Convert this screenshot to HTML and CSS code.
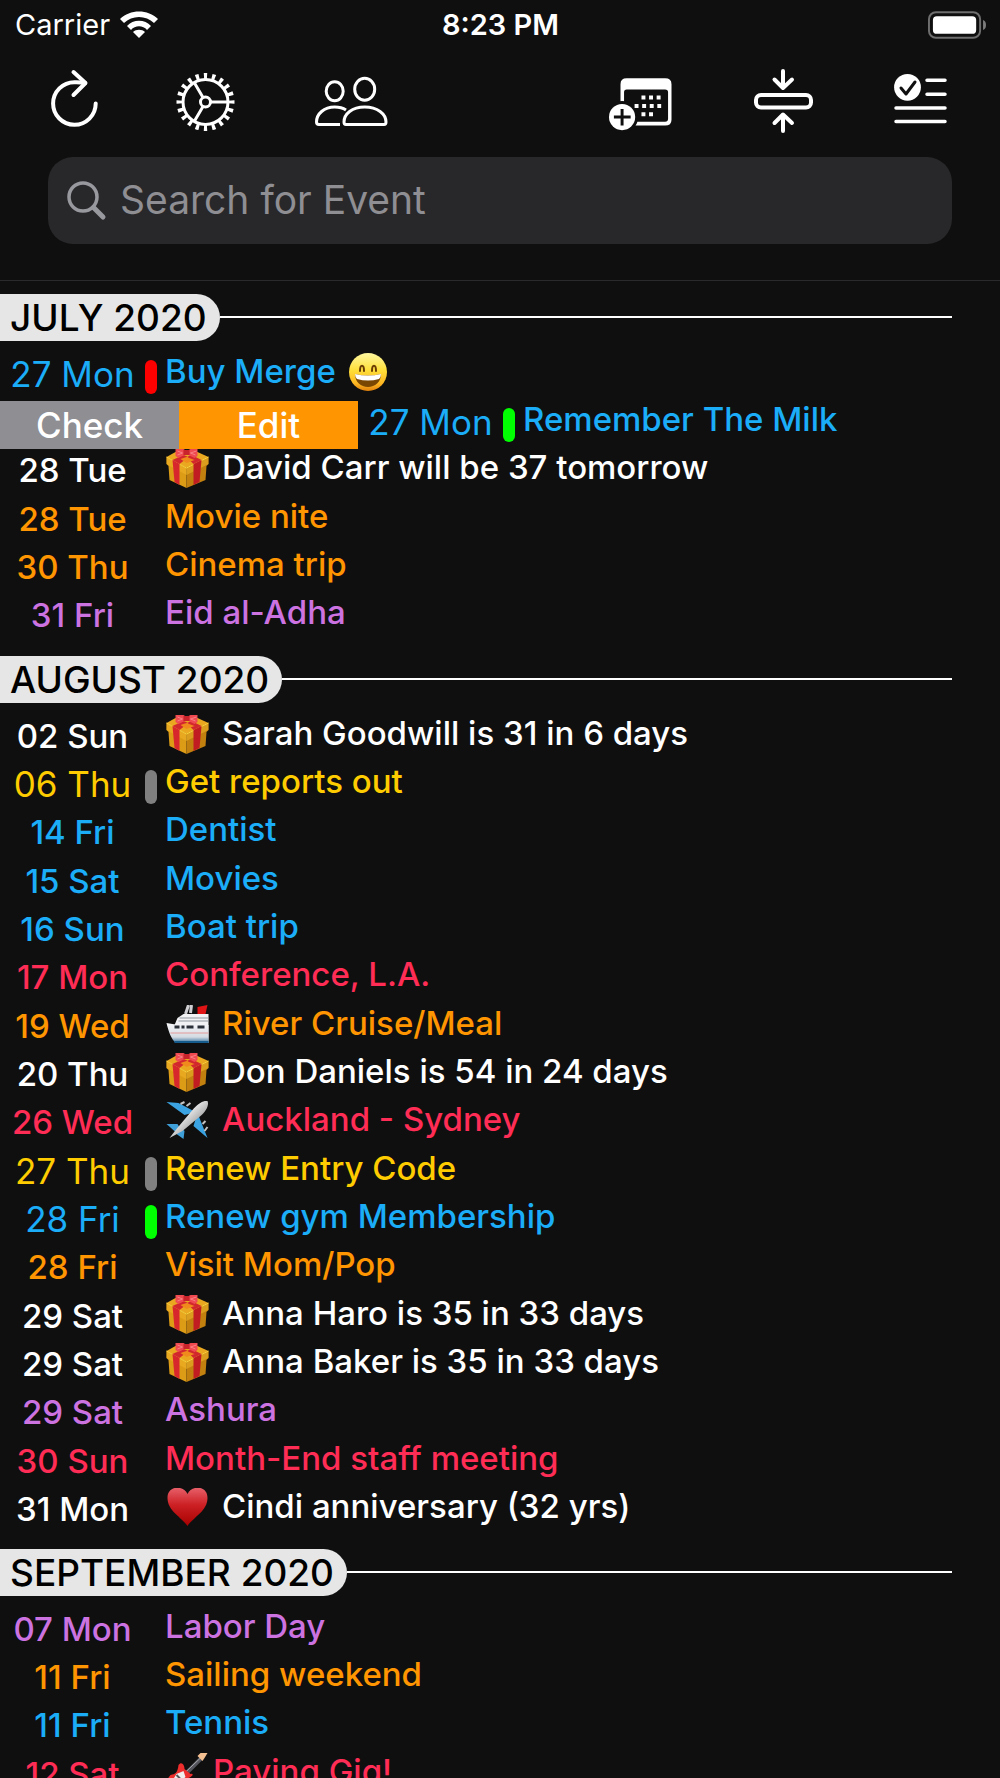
FILE: index.html
```html
<!DOCTYPE html>
<html lang="en">
<head>
    <meta charset="UTF-8">
    <meta name="viewport" content="width=device-width, initial-scale=1">
    <title>Events</title>
    <link rel="stylesheet" href="styles.css">
</head>
<body>
    <!-- shared pictures for the event rows -->
    <svg class="defs" width="0" height="0" aria-hidden="true">
        <defs>
            <linearGradient id="faceFill" x1="0" y1="0" x2="0" y2="1">
                <stop offset="0" stop-color="#fff8a0"/>
                <stop offset="0.45" stop-color="#ffdf3a"/>
                <stop offset="0.8" stop-color="#fdb722"/>
                <stop offset="1" stop-color="#e07f0c"/>
            </linearGradient>
            <linearGradient id="heartFill" x1="0" y1="0" x2="0" y2="1">
                <stop offset="0" stop-color="#e8606a"/>
                <stop offset="0.45" stop-color="#cc2024"/>
                <stop offset="1" stop-color="#a80000"/>
            </linearGradient>
            <linearGradient id="hullFill" x1="0" y1="0" x2="0" y2="1">
                <stop offset="0" stop-color="#f6f6f8"/>
                <stop offset="0.7" stop-color="#d5dbe2"/>
                <stop offset="1" stop-color="#2f6f9c"/>
            </linearGradient>
            <linearGradient id="planeFill" x1="0" y1="0" x2="1" y2="1">
                <stop offset="0.3" stop-color="#ffffff"/>
                <stop offset="0.7" stop-color="#9c9c9c"/>
            </linearGradient>
        </defs>
        <symbol id="gift" viewBox="0 0 42 40">
            <path d="M0 8 9 3 31 3 42 8 20 19Z" fill="#e9a820"/>
            <path d="M0 8 20 19V39L3 31 2 17 0 15Z" fill="#dd9c16"/>
            <path d="M42 8 20 19V39L39 31 40 17 42 15Z" fill="#c2800f"/>
            <path d="M0 8 20 19 42 8V15L20 26 0 15Z" fill="#f0b429" opacity="0.55"/>
            <path d="M0 8 20 19 42 8" fill="none" stroke="#f7cf3d" stroke-width="1"/>
            <path d="M6 11 13 15V36L8 33Z" fill="#d8262d"/>
            <path d="M35 11 27 15V36L33 33Z" fill="#c01c22"/>
            <path d="M6 11 17 6 22 8 13 15Z M35 11 25 6 20 8 27 15Z" fill="#d3272e"/>
            <path d="M14 10 20 8 28 11 20 14Z" fill="#f08a1c"/>
            <path d="M9 0H17L20 2 24 0H31V7L28 9 22 6 18 6 12 9 9 7Z" fill="#ef4a50"/>
            <path d="M17 1H23V6H17Z" fill="#c9232b"/>
            <path d="M11 2 16 4 11 6M30 2 24 4 29 6" fill="none" stroke="#f98084" stroke-width="1"/>
        </symbol>
        <symbol id="smile" viewBox="0 0 40 40">
            <circle cx="20" cy="19" r="19" fill="url(#faceFill)"/>
            <path d="M12 18C12 11 16 11 16 18M24 18C24 11 28 11 28 18" fill="none" stroke="#6b3d05" stroke-width="2" stroke-linecap="round"/>
            <path d="M7 21Q20 24 33 21C33 29 27 34 20 34S7 29 7 21Z" fill="#7a4703"/>
            <path d="M7 21Q20 24 33 21Q33 24 31 26Q20 29 9 26Q7 24 7 21Z" fill="#fff"/>
        </symbol>
        <symbol id="ship" viewBox="0 0 42 40">
            <path d="M31 2 41 0 39 9H31Z" fill="#e01414"/>
            <path d="M19 9 22 0M24 8 25 0" stroke="#d0d0d4" stroke-width="3"/>
            <path d="M17 9H42V38H14L8 20 11 13Z" fill="#f2f2f4"/>
            <path d="M13 13H42M12 16H42" stroke="#8f959c" stroke-width="1"/>
            <path d="M0 18 12 20H42V38H9C5 34 2 27 0 18Z" fill="url(#hullFill)"/>
            <path d="M8 22H13M15 22H18M20 22H27M31 22H38" stroke="#2b2f38" stroke-width="3"/>
            <path d="M4 28H42" stroke="#e39a9a" stroke-width="1"/>
            <path d="M8 37H42" stroke="#155c8d" stroke-width="2"/>
        </symbol>
        <symbol id="plane" viewBox="0 0 42 40">
            <path d="M0 1 12 2 29 11 18 14ZM41 37 39 32 31 12 27 25Z" fill="#3ba3e2"/>
            <path d="M0 23H11L14 28 9 31ZM17 38 18 30 13 25 10 33Z" fill="#3f9fd8"/>
            <path d="M14 3 18 1M20 5 24 2M36 23 39 20M38 30 41 26" stroke="#c4c4c4" stroke-width="2"/>
            <path d="M41 0C43 4 39 11 34 15L16 30 3 37 10 28 26 9C31 3 37 -1 41 0Z" fill="url(#planeFill)"/>
        </symbol>
        <symbol id="heart" viewBox="0 0 42 40">
            <path d="M21 38C15 29 1 23 1 10C1 -3 17 -3 21 6C25 -3 41 -3 41 10C41 23 27 29 21 38Z" fill="url(#heartFill)"/>
        </symbol>
        <symbol id="guitar" viewBox="0 0 42 40">
            <path d="M16 24 35 5" stroke="#53545c" stroke-width="4"/>
            <path d="M16 22 35 4" stroke="#a7a8ad" stroke-width="1"/>
            <path d="M31 3 34 0H41L38 5 36 8Z" fill="#f5c091"/>
            <path d="M12 12C15 8 18 12 18 16L24 21C28 20 26 24 22 25C18 29 20 40 8 40C-3 39 -1 27 4 22C9 21 11 20 12 12Z" fill="#ee2d2d"/>
            <path d="M10 21 17 18 19 24 9 33 5 29Z" fill="#f1eeee"/>
            <path d="M10 22 14 26M8 26 12 30" stroke="#55575c" stroke-width="2"/>
        </symbol>
    </svg>

    <div class="app">
        <div class="status">
            <div class="carrier">
                <span>Carrier</span>
                <svg width="38" height="28" viewBox="0 0 38 28" aria-hidden="true">
                    <path d="M0 8C10 -2 28 -2 38 8L34 12C26 4 12 4 4 12Z" fill="#fff"/>
                    <path d="M7 15C13 8 25 8 31 15L27 19C23 14 15 14 11 19Z" fill="#fff"/>
                    <path d="M13 21C16 18 22 18 25 21L19 27Z" fill="#fff"/>
                </svg>
            </div>
            <time class="clock">8:23 PM</time>
            <svg class="battery" width="58" height="28" viewBox="0 0 59 28" aria-hidden="true">
                <rect x="1" y="1" width="52" height="26" rx="7" fill="none" stroke="#6e6e6e" stroke-width="2"/>
                <rect x="5" y="5" width="44" height="18" rx="4" fill="#fff"/>
                <path d="M56 9Q59 10 59 14T56 19Z" fill="#7d7d7d"/>
            </svg>
        </div>

        <div class="toolbar">
            <div class="tools tools-left">
                <button type="button" aria-label="Refresh">
                    <svg width="48" height="64" viewBox="0 0 48 64" fill="none" stroke="#fff" stroke-width="4" stroke-linecap="round" stroke-linejoin="round">
                        <path d="M45.7 34.5A21.3 21.3 0 1 1 24.5 13.2Q30 13 35 14"/>
                        <path d="M23.5 3 35.5 14 23.5 26"/>
                    </svg>
                </button>
                <button type="button" aria-label="Settings">
                    <svg width="60" height="64" viewBox="1 0 60 64" fill="none" stroke="#fff" stroke-width="3">
                        <circle cx="30.5" cy="33" r="22.5"/>
                        <circle cx="30.5" cy="33" r="26" stroke-width="6" pathLength="60" stroke-dasharray="1.2 1.8" stroke-dashoffset="0.6"/>
                        <circle cx="30.5" cy="33" r="5"/>
                        <path d="M35.5 33H52.5M28 28.5 19.5 14M28 37.5 19.5 52"/>
                    </svg>
                </button>
                <button type="button" aria-label="People">
                    <svg width="74" height="64" viewBox="0 0 74 64" fill="none" stroke="#fff" stroke-width="3">
                        <ellipse cx="20.7" cy="22.3" rx="8.5" ry="9.5"/>
                        <ellipse cx="50.7" cy="20.3" rx="10" ry="11"/>
                        <path d="M26 55.5H5Q2.5 55.5 2.5 53C2.5 45 10 38 20.7 38C25 38 29 39 32 41"/>
                        <path d="M32 55.5Q30 55.5 30 53C30 45 38 38 50.7 38S72 45 72 53Q72 55.5 70 55.5Z"/>
                    </svg>
                </button>
            </div>
            <div class="tools tools-right">
                <button type="button" aria-label="Add event">
                    <svg width="64" height="64" viewBox="-1 0 65 64" fill="#fff">
                        <path fill-rule="evenodd" d="M18 9H57Q63.5 9 63.5 15V51Q63.5 57 57 57H18Q11.7 57 11.7 51V15Q11.7 9 18 9ZM18 20.3Q15.3 20.3 15.3 23V50Q15.3 53 18 53H57Q60 53 60 50V23Q60 20.3 57 20.3Z"/>
                        <circle cx="13.3" cy="48.3" r="16.3" fill="#0f0f0f"/>
                        <circle cx="13.3" cy="48.3" r="13.3"/>
                        <path d="M5 48.3H22M13.3 40V57" stroke="#0f0f0f" stroke-width="3"/>
                        <path d="M33 28.5H53M26 37H53M33 45.5H45" stroke="#fff" stroke-width="4" stroke-dasharray="4 3.7"/>
                    </svg>
                </button>
                <button type="button" aria-label="Collapse">
                    <svg width="60" height="64" viewBox="0 0 60 64" fill="none" stroke="#fff" stroke-width="4" stroke-linecap="round" stroke-linejoin="round">
                        <rect x="3" y="26" width="55" height="12.5" rx="5"/>
                        <path d="M30 2V19M21.5 10.5 30 19 39 10.5"/>
                        <path d="M30 62V46M21.5 54 30 45.5 39 54"/>
                    </svg>
                </button>
                <button type="button" aria-label="Checklist">
                    <svg width="53" height="64" viewBox="0 0 53 64" fill="none" stroke="#fff" stroke-width="3.5" stroke-linecap="round" stroke-linejoin="round">
                        <circle cx="13.5" cy="18.3" r="13.4" fill="#fff" stroke="none"/>
                        <path d="M7 19 12 25 21 13" stroke="#0f0f0f" stroke-width="3"/>
                        <path d="M33 11.3H51M33 25.3H51M2 39H51M2 52.6H51"/>
                    </svg>
                </button>
            </div>
        </div>

        <label class="search">
            <svg width="40" height="40" viewBox="0 0 40 40" fill="none" stroke="#98989f" aria-hidden="true">
                <circle cx="16" cy="16" r="14" stroke-width="3.5"/>
                <path d="M26.5 26.5 36 36" stroke-width="5" stroke-linecap="round"/>
            </svg>
            <input type="search" placeholder="Search for Event" aria-label="Search for Event">
        </label>

        <main class="events">
            <h2 class="month"><span>JULY 2020</span></h2>
            <ul>
                <li class="blue reminder"><span class="date">27 Mon</span><span class="bar bar-red"></span><span class="title">Buy Merge <svg class="emoji face"><use href="#smile"/></svg></span></li>
                <li class="blue reminder">
                    <button type="button" class="action check">Check</button>
                    <button type="button" class="action edit">Edit</button>
                    <span class="date">27 Mon</span><span class="bar bar-green"></span><span class="title">Remember The Milk</span>
                </li>
                <li><span class="date">28 Tue</span><span class="bar"></span><span class="title"><svg class="emoji"><use href="#gift"/></svg> David Carr will be 37 tomorrow</span></li>
                <li class="orange"><span class="date">28 Tue</span><span class="bar"></span><span class="title">Movie nite</span></li>
                <li class="orange"><span class="date">30 Thu</span><span class="bar"></span><span class="title">Cinema trip</span></li>
                <li class="purple"><span class="date">31 Fri</span><span class="bar"></span><span class="title">Eid al-Adha</span></li>
            </ul>

            <h2 class="month"><span>AUGUST 2020</span></h2>
            <ul>
                <li><span class="date">02 Sun</span><span class="bar"></span><span class="title"><svg class="emoji"><use href="#gift"/></svg> Sarah Goodwill is 31 in 6 days</span></li>
                <li class="yellow reminder"><span class="date">06 Thu</span><span class="bar bar-gray"></span><span class="title">Get reports out</span></li>
                <li class="blue"><span class="date">14 Fri</span><span class="bar"></span><span class="title">Dentist</span></li>
                <li class="blue"><span class="date">15 Sat</span><span class="bar"></span><span class="title">Movies</span></li>
                <li class="blue"><span class="date">16 Sun</span><span class="bar"></span><span class="title">Boat trip</span></li>
                <li class="red"><span class="date">17 Mon</span><span class="bar"></span><span class="title">Conference, L.A.</span></li>
                <li class="orange"><span class="date">19 Wed</span><span class="bar"></span><span class="title"><svg class="emoji"><use href="#ship"/></svg> River Cruise/Meal</span></li>
                <li><span class="date">20 Thu</span><span class="bar"></span><span class="title"><svg class="emoji"><use href="#gift"/></svg> Don Daniels is 54 in 24 days</span></li>
                <li class="red"><span class="date">26 Wed</span><span class="bar"></span><span class="title"><svg class="emoji"><use href="#plane"/></svg> Auckland - Sydney</span></li>
                <li class="yellow reminder"><span class="date">27 Thu</span><span class="bar bar-gray"></span><span class="title">Renew Entry Code</span></li>
                <li class="blue reminder"><span class="date">28 Fri</span><span class="bar bar-green"></span><span class="title">Renew gym Membership</span></li>
                <li class="orange"><span class="date">28 Fri</span><span class="bar"></span><span class="title">Visit Mom/Pop</span></li>
                <li><span class="date">29 Sat</span><span class="bar"></span><span class="title"><svg class="emoji"><use href="#gift"/></svg> Anna Haro is 35 in 33 days</span></li>
                <li><span class="date">29 Sat</span><span class="bar"></span><span class="title"><svg class="emoji"><use href="#gift"/></svg> Anna Baker is 35 in 33 days</span></li>
                <li class="purple"><span class="date">29 Sat</span><span class="bar"></span><span class="title">Ashura</span></li>
                <li class="red"><span class="date">30 Sun</span><span class="bar"></span><span class="title">Month-End staff meeting</span></li>
                <li><span class="date">31 Mon</span><span class="bar"></span><span class="title"><svg class="emoji"><use href="#heart"/></svg> Cindi anniversary (32 yrs)</span></li>
            </ul>

            <h2 class="month"><span>SEPTEMBER 2020</span></h2>
            <ul>
                <li class="purple"><span class="date">07 Mon</span><span class="bar"></span><span class="title">Labor Day</span></li>
                <li class="orange"><span class="date">11 Fri</span><span class="bar"></span><span class="title">Sailing weekend</span></li>
                <li class="blue"><span class="date">11 Fri</span><span class="bar"></span><span class="title">Tennis</span></li>
                <li class="red"><span class="date">12 Sat</span><span class="bar"></span><span class="title tight"><svg class="emoji"><use href="#guitar"/></svg>Paying Gig!</span></li>
            </ul>
        </main>
    </div>
</body>
</html>
```

FILE: styles.css
```css
* {
    box-sizing: border-box;
}

body {
    margin: 0;
    background-color: #0f0f0f;
    color: #fff;
    font-family: Inter, Roboto, sans-serif;
}

button {
    border: none;
    padding: 0;
    background: none;
    color: inherit;
    font: inherit;
    cursor: pointer;
}

svg {
    display: block;
    flex: none;
}

/* out of the flow, gradients must stay rendered */
.defs {
    position: absolute;
}

.app {
    display: flex;
    flex-direction: column;
    height: 100vh;
    overflow: hidden;
}

/* status bar */
.status {
    display: grid;
    grid-template-columns: 1fr auto 1fr;
    align-items: center;
    height: 50px;
    padding: 0 14px 0 15px;
    font-size: 29px;
    line-height: 50px;
}

.carrier {
    display: flex;
    align-items: center;
    gap: 10px;
}

.clock {
    font-weight: 600;
}

.battery {
    justify-self: end;
}

/* toolbar */
.toolbar {
    display: flex;
    justify-content: space-between;
    padding: 19px 53px 24px 50px;
}

.tools {
    display: flex;
}

.tools-left {
    gap: 78px;
}

.tools-right {
    gap: 81px;
}

/* search */
.search {
    display: flex;
    flex: none;
    align-items: center;
    gap: 13px;
    height: 87px;
    margin: 0 48px 36px;
    padding: 0 19px;
    border-radius: 25px;
    background-color: #28282a;
}

.search input {
    flex: 1;
    min-width: 0;
    border: none;
    padding: 0 0 3px;
    outline: none;
    background: none;
    color: #fff;
    font: inherit;
    font-size: 39px;
}

.search input::placeholder {
    color: #8e8e93;
    opacity: 1;
}

/* event list */
.events {
    flex: 1;
    min-height: 0;
    overflow: hidden;
    border-top: 1px solid #2a2a2c;
}

.month {
    display: flex;
    align-items: center;
    height: 72px;
    margin: 0 48px 0 0;
    font-size: 37px;
    font-weight: 500;
    line-height: 47px;
}

.month span {
    padding: 0 13px 0 10px;
    border-radius: 0 24px 24px 0;
    background-color: #e6e6e6;
    color: #000;
}

.month::after {
    content: "";
    flex: 1;
    height: 2px;
    background-color: #fff;
}

.events ul {
    margin: 0;
    padding: 0;
    list-style: none;
}

.events li {
    display: flex;
    height: 48px;
    font-size: 33px;
    font-weight: 500;
    white-space: nowrap;
}

.events li:nth-child(3n) {
    height: 49px;
}

.date {
    flex: none;
    width: 145px;
    line-height: 42px;
    text-align: center;
}

.reminder .date {
    font-size: 35px;
    font-weight: 400;
}

.bar {
    flex: none;
    width: 12px;
    height: 34px;
    margin: 7px 8px 0 0;
    border-radius: 6px;
}

.title {
    display: flex;
    gap: 12px;
    line-height: 36px;
}

.tight {
    gap: 3px;
}

.emoji {
    width: 45px;
    height: 40px;
}

.face {
    width: 40px;
}

.action {
    flex: none;
    width: 179px;
    color: #fff;
    font-size: 35px;
}

.check {
    background-color: #8e8e93;
}

.edit {
    background-color: #ff9500;
}

.blue {
    color: #1badf8;
}

.orange {
    color: #ff9500;
}

.purple {
    color: #cc73e1;
}

.yellow {
    color: #ffcc00;
}

.red {
    color: #ff2d55;
}

.bar-red {
    background-color: #ff0000;
}

.bar-green {
    background-color: #00ff00;
}

.bar-gray {
    background-color: #808080;
}
```
